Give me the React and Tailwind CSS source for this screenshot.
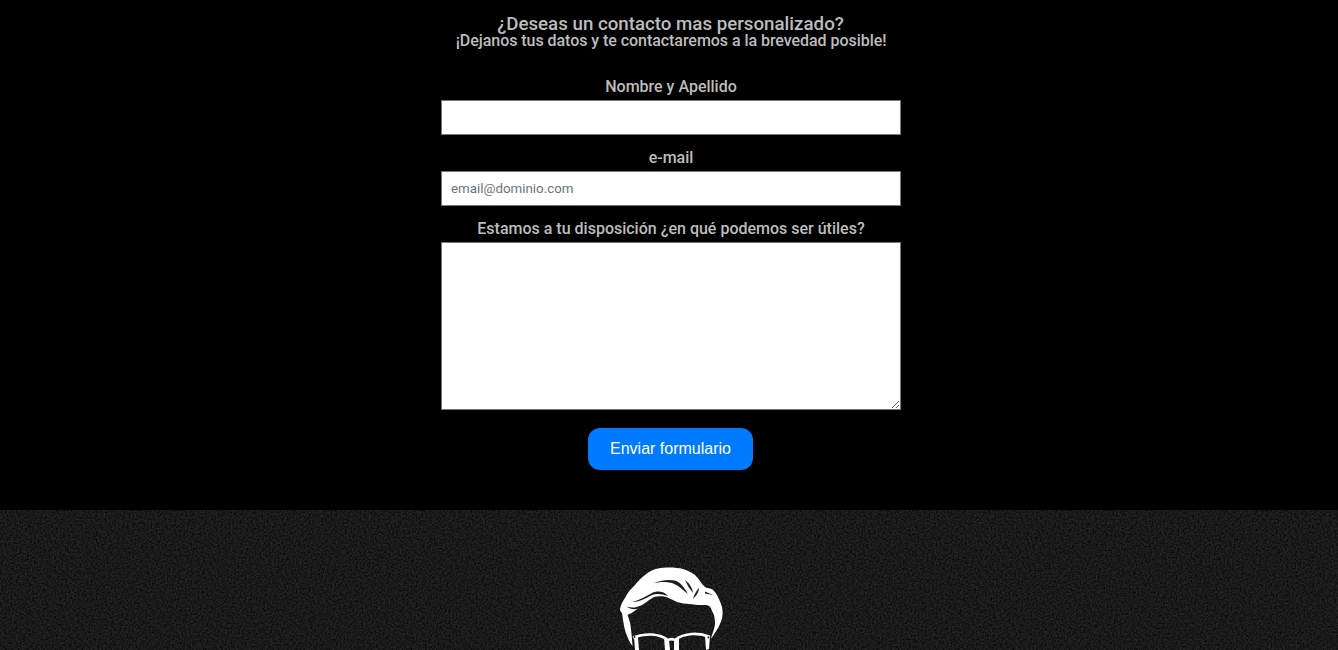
import React from 'react';

function Logo() {
    return (
        <svg viewBox="590 550 160 100" className="w-[160px] h-[100px] block">
            {/* hair */}
            <path
                fill="#fff"
                d="M620 609 C621 604 623 601 625 598 C628 592 631 589 635 585 C638 581 641 578 645 575 C650 571 654 569 658 568.5 C665 567 676 567 683 569 C689 571 692 573 695 575 C698 578 700 581 702 584 C704 586 705 587 707 588 C710 588 712 589 713 590 C716 593 717 595 718 597 C720 601 722 606 722.5 610 C723 615 722 620 720 624 C718 629 714 634 711 639 C712 634 715 628 715 623 C715 618 714 614 712 611 C711 607 709 605 706 605 C700 605 695 605 690 604 C685 604 681 603 677 602 C672 600 668 597 664 596.5 C660 596 657 596 654 597 C648 600 642 606 636 610 C633 612 630 614 627.5 615 C629 619 630 622 630.5 625 C631 630 632 636 632.5 646 C629 642 627 636 625.5 632 C624 627 623 620 622 613 C621 612 620 611 620 609 Z"
            />
            {/* hair strands */}
            <path fill="#1c1e1c" d="M653 583.5 C660 580.5 668 579 675 580.5 C680 582 684 587 688 594 C683 590 678 585 672 583 C665 581.5 659 582 653 583.5 Z" />
            <path fill="#1c1e1c" d="M685 580 C689 583 692 587 693 593 C690 589 687 585 685 580 Z" />
            <path fill="#1c1e1c" d="M699 588 C699 592 696 596 693 599 C694 595 696 591 699 588 Z" />
            <path fill="#1c1e1c" d="M705 591.5 L713 595 L705 593.5 Z" />
            <path fill="#1c1e1c" d="M632 602 C640 600 646 596 652 593 C657 590.5 664 591 668 596 C662 594 657 593 652 595 C646 598.5 639 602 632 602 Z" />
            <path fill="#1c1e1c" d="M627 606.5 C632 608.5 637 607.5 642 605 C647 602 653 599 658 597.5 C652 601 646 605.5 640 608 C635 610 630 609.5 627 606.5 Z" />
            {/* glasses */}
            <path
                fill="none"
                stroke="#fff"
                strokeWidth="2.5"
                d="M633 637.5 C640 635 646 634 652 634.5 C658 635 664 637 668 640 C670 639 673 639 675 640 C680 636 686 634.5 692 634 C698 633.5 704 634.5 710 637"
            />
            <path fill="#fff" d="M634 637 L638 637 L639 650 L635 650 Z" />
            <path fill="#fff" d="M664 637 L669 640 L670 650 L665 650 Z" />
            <path fill="#fff" d="M674 640 L679 637 L679 650 L674 650 Z" />
            <path fill="#fff" d="M705 636 L710 636 L709 649 L706 650 Z" />
            <circle cx="634.5" cy="637" r="1" fill="#1c1e1c" />
            <circle cx="708.5" cy="637.5" r="1" fill="#1c1e1c" />
        </svg>
    );
}

export default function App() {
    return (
        <div className="h-[650px] overflow-hidden font-['Roboto',sans-serif]">
            <section className="bg-black h-[510px] pt-[15px] pl-[4px] flex flex-col items-center text-[#bdbdbd] font-medium">
                <h2 className="text-[18.72px] leading-[18px] text-center mr-[1px]">¿Deseas un contacto mas personalizado?</h2>
                <h3 className="text-[16px] leading-[14px] tracking-[-0.05px] text-center mt-[1px] mb-[29px]">¡Dejanos tus datos y te contactaremos a la brevedad posible!</h3>

                <form className="w-[460px] flex flex-col items-center">
                    <label className="text-[16px] leading-[19px] mb-[4px]">Nombre y Apellido</label>
                    <input type="text" className="w-full h-[35px] bg-white border border-[#767676] px-[9px] text-[13px] mb-[13px]" />

                    <label className="text-[16px] leading-[19px] mb-[4px]">e-mail</label>
                    <input
                        type="email"
                        placeholder="email@dominio.com"
                        className="w-full h-[35px] bg-white border border-[#767676] px-[9px] text-[13.33px] font-normal placeholder:text-[#6c757d] mb-[13px]"
                    />

                    <label className="text-[16px] leading-[19px] mb-[4px]">Estamos a tu disposición ¿en qué podemos ser útiles?</label>
                    <textarea className="w-full h-[168px] block bg-white border border-[#767676] resize-y" />

                    <button type="button" className="mt-[18px] mr-[1px] w-[165px] h-[42px] rounded-[12px] bg-[#007bff] text-white text-[16px] font-normal font-['Liberation_Sans',sans-serif]">
                        Enviar formulario
                    </button>
                </form>
            </section>

            <footer className="relative h-[140px] bg-[#232523] overflow-hidden">
                {/* grain of the footer background */}
                <svg className="absolute inset-0 w-full h-full" aria-hidden="true">
                    <filter id="grain">
                        <feTurbulence type="fractalNoise" baseFrequency="0.55" numOctaves="2" seed="4" />
                        <feColorMatrix values="0 0 0 0 0 0 0 0 0 0 0 0 0 0 0 1.6 0 0 0 -0.5" />
                    </filter>
                    <rect width="100%" height="100%" filter="url(#grain)" />
                </svg>
                <div className="relative flex justify-center pt-[40px]">
                    <div className="translate-x-[1px]"><Logo /></div>
                </div>
            </footer>
        </div>
    );
}
